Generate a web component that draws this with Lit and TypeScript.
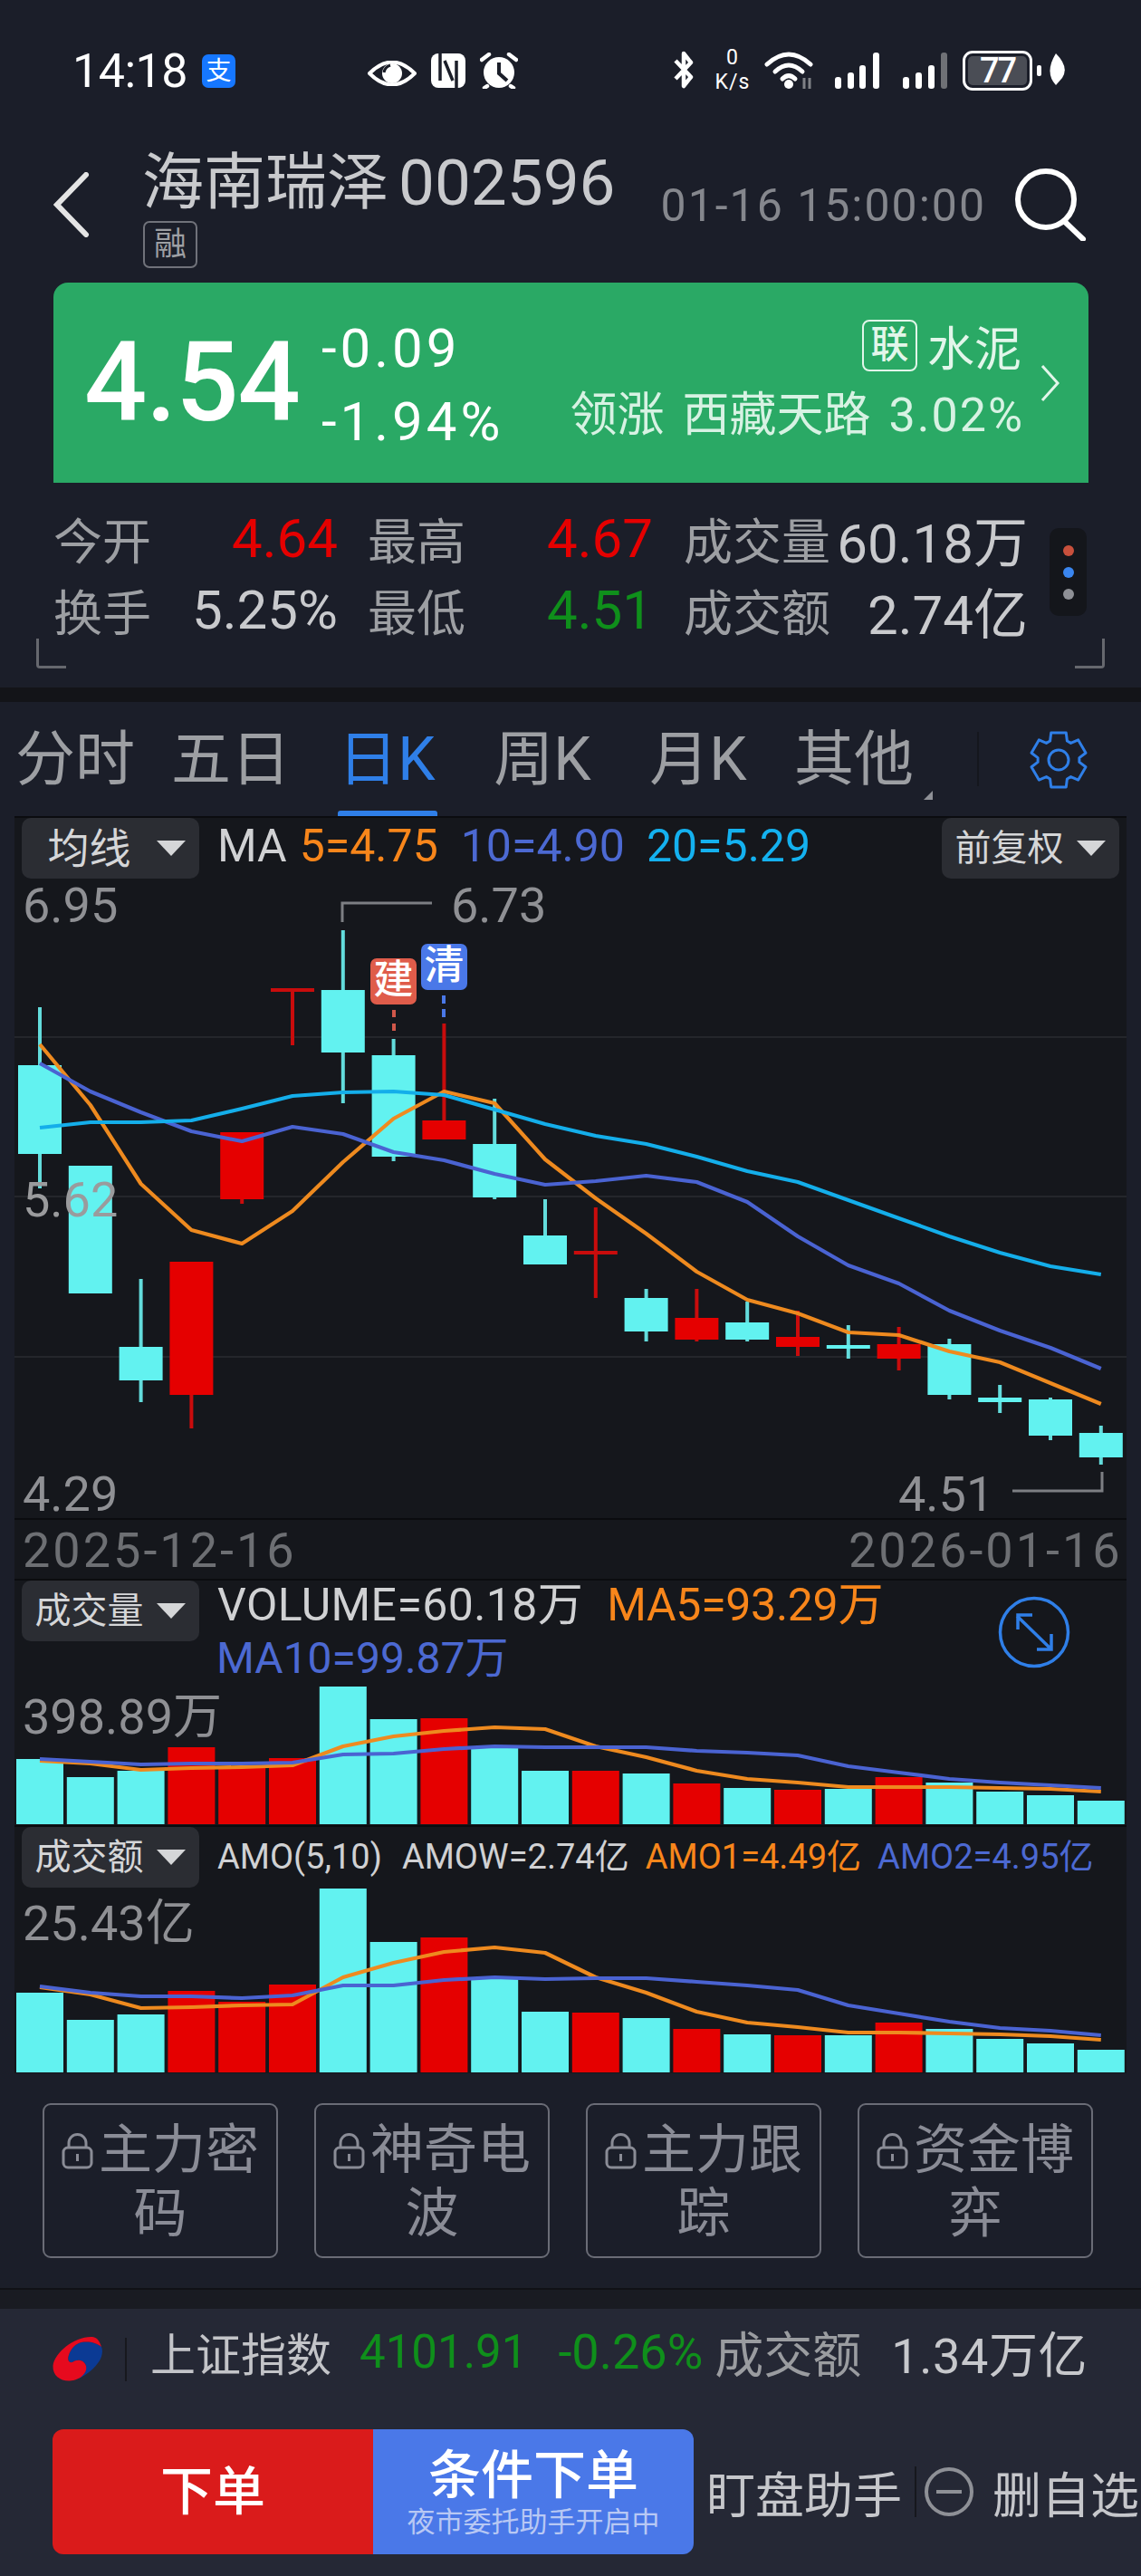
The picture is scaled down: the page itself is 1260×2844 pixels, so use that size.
import { LitElement, html, css, svg } from "lit";
import { customElement } from "lit/decorators.js";

type Candle = [number, number, number, number, number]; // up, wickTop, wickBot, bodyTop, bodyBot
const cx = (i: number) => 44 + 55.8 * i;
const CANDLES: Candle[] = [
  [0, 1112, 1312, 1176, 1274],
  [0, 1287, 1428, 1287, 1428],
  [0, 1412, 1548, 1487, 1524],
  [1, 1393, 1577, 1393, 1540],
  [1, 1250, 1329, 1250, 1324],
  [1, 1091, 1154, 1091, 1095],
  [0, 1027, 1218, 1093, 1162],
  [0, 1147, 1282, 1165, 1277],
  [1, 1130, 1258, 1237, 1258],
  [0, 1213, 1324, 1263, 1322],
  [0, 1324, 1396, 1364, 1396],
  [1, 1333, 1433, 1381, 1385],
  [0, 1423, 1481, 1433, 1470],
  [1, 1423, 1481, 1455, 1479],
  [0, 1437, 1481, 1460, 1479],
  [1, 1447, 1497, 1476, 1487],
  [0, 1463, 1500, 1485, 1489],
  [1, 1465, 1513, 1484, 1500],
  [0, 1478, 1545, 1484, 1540],
  [0, 1529, 1560, 1543, 1548],
  [0, 1543, 1590, 1545, 1585],
  [0, 1574, 1617, 1582, 1609],
];
const K_MA5 = [1153,1220,1307,1358,1373,1337,1283,1235,1205,1218,1280,1323,1362,1404,1435,1450,1471,1474,1492,1504,1527,1550];
const K_MA10 = [1174,1205,1228,1249,1260,1244,1252,1272,1281,1296,1308,1304,1298,1305,1327,1365,1397,1417,1447,1469,1488,1511];
const K_MA20 = [1245,1239,1239,1237,1224,1210,1206,1205,1209,1225,1241,1254,1263,1277,1293,1305,1325,1345,1365,1383,1398,1407];
const V_UP = [0,0,0,1,1,1,0,0,1,0,0,1,0,1,0,1,0,1,0,0,0,0];
const V_TOP = [1942,1962,1955,1929,1950,1941,1862,1898,1897,1930,1955,1955,1958,1969,1974,1976,1975,1962,1968,1978,1982,1988];
const V_MA5 = [1944,1947,1954,1952,1951,1949,1928,1917,1911,1907,1909,1928,1940,1955,1964,1968,1973,1973,1973,1974,1975,1978];
const V_MA10 = [1942,1945,1948,1947,1947,1946,1937,1936,1931,1928,1929,1929,1929,1933,1935,1938,1950,1957,1964,1968,1971,1974];
const A_TOP = [2200,2230,2224,2198,2210,2191,2085,2144,2139,2185,2221,2222,2228,2240,2246,2247,2247,2233,2240,2251,2256,2263];
const A_MA1 = [2194,2202,2217,2216,2214,2213,2183,2167,2155,2150,2156,2183,2200,2221,2233,2238,2244,2244,2245,2246,2248,2252];
const A_MA2 = [2193,2200,2204,2204,2206,2203,2192,2192,2186,2183,2185,2184,2184,2188,2192,2197,2214,2223,2232,2239,2242,2247];

const CYAN = "#62f2f0";
const CYAN_W = "#63dcdc";
const RED = "#e50000";
const RED_W = "#c90c0c";
const ORANGE = "#ee8a1f";
const BLUE = "#4a63d2";
const SKY = "#14aeea";

const pts = (ys: number[]) => ys.map((y, i) => `${cx(i)},${y}`).join(" ");
const line = (ys: number[], c: string, w = 4.2) =>
  svg`<polyline points=${pts(ys)} fill="none" stroke=${c} stroke-width=${w} stroke-linejoin="round"></polyline>`;
const bars = (tops: number[], base: number) =>
  tops.map(
    (t, i) =>
      svg`<rect x=${cx(i) - 26} y=${t} width="52" height=${base - t} fill=${V_UP[i] ? RED : CYAN}></rect>`
  );

function gearPath(c: number, r1: number, r2: number): string {
  const p: string[] = [];
  for (let i = 0; i < 6; i++) {
    const a = (-90 + i * 60) * (Math.PI / 180);
    const d = 0.27;
    const v = [
      [r1, a - 0.52 + 0.1],
      [r2, a - d],
      [r2, a + d],
      [r1, a + 0.52 - 0.1],
    ];
    for (const [r, t] of v) p.push(`${(c + r * Math.cos(t)).toFixed(1)} ${(c + r * Math.sin(t)).toFixed(1)}`);
  }
  return "M" + p.join("L") + "Z";
}

const caret = html`<i class="caret"></i>`;
const lock = html`<svg class="lock" viewBox="0 0 35 40"><path d="M8 17V11a9.500 9.500 0 0 1 19 0v6" fill="none" stroke="#8a8c96" stroke-width="3"/><rect x="2" y="16" width="31" height="22" rx="5" fill="none" stroke="#8a8c96" stroke-width="3"/><rect x="16" y="23" width="3" height="8" fill="#8a8c96"/></svg>`;

@customElement("app-root")
export class AppRoot extends LitElement {
  static styles = css`
    :host {
      display: block;
      width: 1260px;
      height: 2844px;
      overflow: hidden;
      background: #1b1e29;
      font-family: Roboto, "Noto Sans CJK SC", sans-serif;
      color: #c9cacd;
    }
    * { box-sizing: border-box; }

    /* status bar */
    .status { height: 150px; display: flex; align-items: flex-start; padding: 56px 0 0 80px; color: #fff; position: relative; }
    .time { font-size: 52px; line-height: 46px; width: 143px; letter-spacing: -0.5px; }
    .ali { width: 37px; height: 37px; margin-top: 4px; border-radius: 7px; background: #1677ff; color: #fff; font-size: 28px; line-height: 37px; text-align: center; }
    .s-center { margin-left: 146px; display: flex; align-items: center; gap: 16px; height: 44px; }
    .s-right { margin-left: 170px; display: flex; align-items: flex-start; height: 44px; }
    .net { width: 46px; margin: -6px 0 0 18px; text-align: center; font-size: 23px; line-height: 27px; letter-spacing: 1px; }
    .wifi { margin-left: 12px; }
    .sig1 { margin-left: 21px; }
    .sig2 { margin-left: 23px; }
    .batt { width: 77px; height: 44px; margin-left: 15px; border: 3px solid #fff; border-radius: 11px; padding: 3px; }
    .batt span { display: block; height: 32px; border-radius: 5px; background: #4a4d55; font-size: 38px; line-height: 32px; font-weight: 500; text-align: center; letter-spacing: -2px; }
    .leaf { margin-left: 5px; }

    /* header */
    .head { height: 150px; display: flex; align-items: flex-start; position: relative; }
    .back { width: 40px; height: 72px; margin: 40px 0 0 59px; }
    .name { margin-left: 58px; padding-top: 17px; }
    .name-row { display: flex; align-items: center; height: 70px; font-size: 68px; line-height: 70px; color: #c9cacd; }
    .name-row b { font-weight: 400; margin-left: 11px; font-size: 71px; }
    .rong { width: 60px; height: 52px; margin: 7px 0 0 1px; border: 2px solid #70727a; border-radius: 7px; color: #9d9fa3; font-size: 36px; line-height: 48px; text-align: center; }
    .date { margin-left: auto; margin-right: 31px; margin-top: 52px; font-size: 50px; line-height: 50px; color: #85878d; letter-spacing: 2px; }
    .search { width: 80px; height: 80px; margin: 36px 60px 0 0; }

    /* quote card */
    .card { margin: 12px 58px 0 59px; height: 221px; background: #2aa965; border-radius: 16px 16px 0 0; display: flex; color: #fff; position: relative; }
    .price { font-size: 122px; line-height: 221px; font-weight: 500; padding-left: 34px; width: 296px; letter-spacing: -1px; }
    .chg { font-size: 60px; line-height: 80px; padding-top: 33px; letter-spacing: 4px; }
    .chg div { height: 81px; }
    .sector { margin-left: auto; margin-right: 71px; display: flex; flex-direction: column; align-items: flex-end; padding-top: 38px; color: #d7f2e3; font-size: 52px; }
    .sector-top { display: flex; align-items: center; height: 62px; margin-right: 3px; color: #e2f6ea; }
    .lian { width: 61px; height: 57px; margin-right: 11px; border: 2px solid #e2f6ea; border-radius: 8px; font-size: 42px; line-height: 51px; text-align: center; font-weight: 500; }
    .sector-bot { margin-top: 16px; line-height: 62px; display: flex; gap: 20px; white-space: nowrap; }
    .sector-bot .pct { letter-spacing: 2px; }
    .chev { position: absolute; left: 1089px; top: 90px; width: 24px; height: 42px; }

    /* stats */
    .stats { height: 226px; position: relative; padding: 22px 0 0 59px; display: grid; grid-template-columns: 120px 194px 140px 208px 195px 219px; grid-auto-rows: 79px; align-items: center; font-size: 54px; color: #9d9fa3; }
    .v { text-align: right; font-size: 60px; color: #c9cacd; white-space: nowrap; }
    .l { white-space: nowrap; }
    .l3 { padding-left: 33px; }
    .l5 { padding-left: 34px; }
    .r { color: #e50000; }
    .g { color: #0f8f1b; }
    .dots { position: absolute; left: 1159px; top: 50px; width: 41px; height: 97px; border-radius: 10px; background: #14161b; display: flex; flex-direction: column; align-items: center; gap: 12px; padding-top: 19px; }
    .dots i { width: 12px; height: 12px; border-radius: 50%; }
    .d1 { background: #c8503c; } .d2 { background: #3a86f0; } .d3 { background: #8e9096; }
    .corner { position: absolute; top: 172px; width: 33px; height: 33px; border-bottom: 3px solid #66686e; }
    .c-l { left: 40px; border-left: 3px solid #66686e; border-bottom-left-radius: 4px; }
    .c-r { left: 1187px; border-right: 3px solid #66686e; border-bottom-right-radius: 4px; }
    .band { height: 16px; background: #131418; }

    /* tabs */
    .tabs { height: 126px; display: flex; align-items: flex-start; padding-top: 28px; }
    .tab-grid { display: grid; grid-template-columns: repeat(6, 172px); margin-left: -3px; }
    .tab { position: relative; height: 98px; text-align: center; font-size: 66px; line-height: 72px; color: #9d9fa3; }
    .tab.on { color: #2f7fe8; }
    .tab.on::after { content: ""; position: absolute; left: 32px; width: 110px; top: 92px; height: 6px; border-radius: 3px 3px 0 0; background: #2f7fe8; }
    .tab.more::after { content: ""; position: absolute; left: 163px; top: 70px; border-style: solid; border-width: 0 0 10px 10px; border-color: transparent transparent #8e9096 transparent; }
    .tab-sep { width: 2px; height: 60px; margin: 5px 0 0 50px; background: #15171d; }
    .gear { width: 66px; height: 66px; margin: 3px 0 0 55px; }

    /* chart */
    .chart { margin: 0 16px; width: 1228px; background: #15171c; }
    .pane { position: relative; border-top: 2px solid #0b0c0f; }
    .pane svg.plot { position: absolute; left: 0; top: -2px; width: 1228px; }
    .legend { position: relative; display: flex; align-items: flex-start; padding-left: 8px; font-size: 50px; line-height: 50px; white-space: nowrap; color: #d0d1d3; }
    .chip { width: 196px; height: 67px; border-radius: 10px; background: #2b2d33; display: flex; align-items: center; font-size: 46px; color: #d5d6d8; flex: none; }
    .chip.three { font-size: 40px; }
    .chip span { flex: 1; text-align: center; }
    .caret { width: 0; height: 0; margin-right: 15px; border-style: solid; border-width: 17px 16px 0 16px; border-color: #d5d6d8 transparent transparent transparent; }
    .o { color: #f8861b; } .b { color: #4c69d2; } .s { color: #14b1ef; }
    .lbl { position: absolute; font-size: 54px; line-height: 54px; color: #8f9094; white-space: nowrap; }

    .p-k { height: 775px; }
    .p-k .t { margin-top: 6px; }
    .k-ma { margin-left: 20px; }
    .k-5 { margin-left: 14px; } .k-10 { margin-left: 25px; } .k-20 { margin-left: 24px; }
    .chip-fq { position: absolute; left: 1024px; top: 0; }
    .hi-l { left: 9px; top: 70px; }
    .hi-v { left: 482px; top: 70px; }
    .mid-l { left: 9px; top: 395px; color: #9a9b9d; }
    .lo-l { left: 9px; top: 720px; }
    .lo-v { left: 976px; top: 720px; }
    .badge { position: absolute; width: 51px; height: 51px; border-radius: 7px; color: #fff; font-size: 44px; line-height: 49px; text-align: center; font-weight: 500; }
    .b-jian { left: 393px; top: 155px; background: #df5c4a; }
    .b-qing { left: 449px; top: 139px; background: #4a78e8; }

    .p-d { height: 67px; }
    .d-l { left: 9px; top: 7px; color: #6d6f73; letter-spacing: 3px; }
    .d-r { left: 921px; top: 7px; color: #6d6f73; letter-spacing: 3px; }

    .p-v { height: 272px; }
    .p-v .t { margin-top: 2px; }
    .vol { margin-left: 20px; letter-spacing: 0.4px; }
    .v-2 { margin-left: 26px; letter-spacing: -0.3px; }
    .v-3 { position: absolute; left: 223px; top: 61px; font-size: 48px; }
    .p-v .v-3 { margin-top: 0; }
    .vmax { left: 9px; top: 124px; }
    .expand { position: absolute; left: 1086px; top: 17px; width: 80px; height: 80px; }

    .p-a { height: 274px; }
    .legend.small { font-size: 38px; line-height: 38px; }
    .legend.small .t { margin-top: 14px; }
    .a-0 { margin-left: 20px; } .a-1 { margin-left: 22px; } .a-2 { margin-left: 18px; }
    .amax { left: 9px; top: 80px; }

    /* locked tools */
    .tools { height: 237px; padding: 33px 53px 0 47px; display: grid; grid-template-columns: repeat(4, 260px); column-gap: 40px; }
    .tool { height: 171px; border: 2px solid #6a6c76; border-radius: 9px; padding: 15px 8px 0; text-align: center; font-size: 59px; line-height: 70px; color: #8a8c96; }
    .lock { display: inline-block; width: 35px; height: 40px; vertical-align: -1px; margin-right: 6px; }
    .band2 { height: 23px; background: #191b22; border-top: 2px solid #101116; }

    /* bottom */
    .bottom { height: 295px; background: #252835; padding-left: 58px; }
    .index { height: 94px; margin-bottom: 39px; display: flex; align-items: center; font-size: 50px; white-space: nowrap; }
    .logo { width: 57px; height: 52px; flex: none; margin-top: 18px; }
    .v-sep { width: 2px; height: 48px; margin: 18px 0 0 23px; background: #17181e; flex: none; }
    .idx-name { margin-left: 26px; color: #c3c4c8; }
    .idx-v { margin-left: 31px; color: #0f8f1b; font-size: 51px; }
    .idx-p { margin-left: 34px; color: #0f8f1b; font-size: 54px; }
    .idx-l { margin-left: 13px; color: #9a9ca0; font-size: 54px; }
    .idx-a { margin-left: 33px; color: #c7c8cc; font-size: 54px; letter-spacing: 0.6px; }
    .actions { display: flex; align-items: center; }
    .order { display: flex; width: 708px; height: 138px; border-radius: 12px; overflow: hidden; color: #fff; flex: none; }
    .o-red { width: 354px; background: #da1b1b; text-align: center; font-size: 58px; line-height: 138px; font-weight: 500; }
    .o-blue { width: 354px; background: #4a78e8; text-align: center; padding-top: 18px; }
    .o-blue b { display: block; font-size: 58px; line-height: 66px; font-weight: 500; }
    .o-blue small { display: block; font-size: 31px; line-height: 38px; color: #b8c8f4; }
    .helper { margin-left: 14px; font-size: 54px; color: #c6c7cb; white-space: nowrap; }
    .a-sep { width: 2px; height: 56px; margin-left: 14px; background: #16171d; flex: none; }
    .minus { width: 56px; height: 56px; margin-left: 8px; flex: none; }
    .del { margin-left: 20px; font-size: 54px; color: #c6c7cb; white-space: nowrap; }
  `;

  render() {
    const gear = gearPath(33, 23, 31);
    return html`
      <div class="status">
        <div class="time">14:18</div>
        <div class="ali">支</div>
        <div class="s-center">
          <svg width="54" height="28" viewBox="0 0 54 28" style="margin-top:6px"><path d="M2 14Q27-11 52 14Q27 39 2 14Z" fill="none" stroke="#fff" stroke-width="4" stroke-linejoin="round"/><circle cx="27" cy="14" r="11" fill="#fff"/><path d="M18 13Q19 7 25 5" fill="none" stroke="#1b1e29" stroke-width="3"/></svg>
          <svg width="38" height="38" viewBox="0 0 38 38"><rect width="38" height="38" rx="8" fill="#fff"/><path d="M10 0V30M28 8V38M15 8L24 30" fill="none" stroke="#1b1e29" stroke-width="3.500"/></svg>
          <svg width="42" height="40" viewBox="0 0 42 40"><circle cx="21" cy="22" r="17" fill="#fff"/><path d="M21 11V23L30 31" fill="none" stroke="#1b1e29" stroke-width="4"/><path d="M2 8L10 2M40 8L32 2M8 37L5 39M34 37L37 39" fill="none" stroke="#fff" stroke-width="4.500" stroke-linecap="round"/></svg>
        </div>
        <div class="s-right">
          <svg width="26" height="42" viewBox="0 0 26 42"><path d="M4 11L21 29L13 39L13 3L21 13L4 31" fill="none" stroke="#fff" stroke-width="4.500" stroke-linejoin="round"/></svg>
          <div class="net">0<br />K/s</div>
          <svg class="wifi" width="56" height="44" viewBox="0 0 56 44"><g fill="none" stroke="#fff" stroke-width="5" stroke-linecap="round"><path d="M3 15Q27-7 51 15"/><path d="M12 23Q27 9 42 23"/><path d="M20 31Q27 24 34 31"/></g><circle cx="27" cy="37" r="5" fill="#fff"/><path d="M44 30V42M50 30V42" stroke="#7f8186" stroke-width="3"/></svg>
          <svg class="sig1" width="52" height="44" viewBox="0 0 52 44"><g fill="#fff"><rect x="1" y="29" width="7" height="13" rx="3"/><rect x="15" y="24" width="7" height="18" rx="3"/><rect x="28" y="16" width="7" height="26" rx="3"/><rect x="43" y="2" width="7" height="40" rx="3"/></g></svg>
          <svg class="sig2" width="52" height="44" viewBox="0 0 52 44"><g fill="#fff"><rect x="1" y="29" width="7" height="13" rx="3"/><rect x="15" y="24" width="7" height="18" rx="3"/><rect x="29" y="16" width="7" height="26" rx="3"/></g><rect x="43" y="2" width="7" height="40" rx="3" fill="#6f7176"/></svg>
          <div class="batt"><span>77</span></div>
          <svg class="leaf" width="32" height="44" viewBox="0 0 32 44"><rect x="0" y="16" width="5" height="12" rx="2" fill="#fff"/><path d="M21 3Q36 18 28 30L21 38Q8 24 21 3Z" fill="#fff"/></svg>
        </div>
      </div>

      <div class="head">
        <svg class="back" viewBox="0 0 40 72"><path d="M36 3L4 36L36 69" fill="none" stroke="#e4e4e4" stroke-width="6" stroke-linecap="round"/></svg>
        <div class="name">
          <div class="name-row">海南瑞泽<b>002596</b></div>
          <div class="rong">融</div>
        </div>
        <div class="date">01-16 15:00:00</div>
        <svg class="search" viewBox="0 0 80 80"><circle cx="35" cy="34" r="31" fill="none" stroke="#fff" stroke-width="6"/><path d="M55 58L76 78" stroke="#fff" stroke-width="6" stroke-linecap="round"/></svg>
      </div>

      <div class="card">
        <div class="price">4.54</div>
        <div class="chg"><div>-0.09</div><div>-1.94%</div></div>
        <div class="sector">
          <div class="sector-top"><span class="lian">联</span>水泥</div>
          <div class="sector-bot"><span>领涨</span><span>西藏天路</span><span class="pct">3.02%</span></div>
        </div>
        <svg class="chev" viewBox="0 0 24 42"><path d="M3 2L20 21L3 40" fill="none" stroke="#e2f6ea" stroke-width="3"/></svg>
      </div>

      <div class="stats">
        <div class="l">今开</div><div class="v r">4.64</div><div class="l l3">最高</div><div class="v r">4.67</div><div class="l l5">成交量</div><div class="v">60.18万</div>
        <div class="l">换手</div><div class="v">5.25%</div><div class="l l3">最低</div><div class="v g">4.51</div><div class="l l5">成交额</div><div class="v">2.74亿</div>
        <div class="dots"><i class="d1"></i><i class="d2"></i><i class="d3"></i></div>
        <div class="corner c-l"></div><div class="corner c-r"></div>
      </div>
      <div class="band"></div>

      <div class="tabs">
        <div class="tab-grid">
          <div class="tab">分时</div><div class="tab">五日</div><div class="tab on">日K</div><div class="tab">周K</div><div class="tab">月K</div><div class="tab more">其他</div>
        </div>
        <div class="tab-sep"></div>
        <svg class="gear" viewBox="0 0 66 66"><path d=${gear} fill="none" stroke="#2f7fe8" stroke-width="3" stroke-linejoin="round"/><circle cx="33" cy="33" r="11" fill="none" stroke="#2f7fe8" stroke-width="3"/></svg>
      </div>

      <div class="chart">
        <div class="pane p-k">
          <svg class="plot" height="775" viewBox="16 901 1228 775">
            ${[1145, 1321, 1498].map((y) => svg`<rect x="16" y=${y - 1} width="1228" height="2" fill="#24262b"></rect>`)}
            <path d="M378 1018V997H477M1118 1646H1217V1625" fill="none" stroke="#7d7f83" stroke-width="3"></path>
            ${CANDLES.map(([up, wt, wb, bt, bb], i) => svg`
              <rect x=${cx(i) - 2} y=${wt} width="4" height=${wb - wt} fill=${up ? RED_W : CYAN_W}></rect>
              <rect x=${cx(i) - 24} y=${bt} width="48" height=${bb - bt} fill=${up ? (bb - bt < 6 ? RED_W : RED) : CYAN}></rect>`)}
            <path d="M435 1115V1138" stroke="#d0574a" stroke-width="4" stroke-dasharray="8 7"></path>
            <path d="M490 1099V1123" stroke="#4a78e8" stroke-width="4" stroke-dasharray="9 6"></path>
            ${line(K_MA5, ORANGE)}
            ${line(K_MA10, BLUE)}
            ${line(K_MA20, SKY)}
          </svg>
          <div class="legend">
            <div class="chip"><span>均线</span>${caret}</div>
            <div class="t k-ma">MA</div>
            <div class="t o k-5">5=4.75</div>
            <div class="t b k-10">10=4.90</div>
            <div class="t s k-20">20=5.29</div>
            <div class="chip three chip-fq"><span>前复权</span>${caret}</div>
          </div>
          <div class="lbl hi-l">6.95</div>
          <div class="lbl hi-v">6.73</div>
          <div class="lbl mid-l">5.62</div>
          <div class="lbl lo-l">4.29</div>
          <div class="lbl lo-v">4.51</div>
          <div class="badge b-jian">建</div>
          <div class="badge b-qing">清</div>
        </div>
        <div class="pane p-d">
          <div class="lbl d-l">2025-12-16</div>
          <div class="lbl d-r">2026-01-16</div>
        </div>
        <div class="pane p-v">
          <svg class="plot" height="272" viewBox="16 1743 1228 272">
            ${bars(V_TOP, 2014)}
            ${line(V_MA5, ORANGE)}
            ${line(V_MA10, BLUE)}
          </svg>
          <div class="legend">
            <div class="chip three"><span>成交量</span>${caret}</div>
            <div class="t vol">VOLUME=60.18万</div>
            <div class="t o v-2">MA5=93.29万</div>
            <div class="t b v-3">MA10=99.87万</div>
          </div>
          <div class="lbl vmax">398.89万</div>
          <svg class="expand" viewBox="0 0 80 80"><circle cx="40" cy="40" r="37.500" fill="none" stroke="#2f7fe8" stroke-width="3.500"/><path d="M21 22L58 58M22 37V21H38M59 42V59H43" fill="none" stroke="#2f7fe8" stroke-width="3.500"/></svg>
        </div>
        <div class="pane p-a">
          <svg class="plot" height="274" viewBox="16 2015 1228 274">
            ${bars(A_TOP, 2288)}
            ${line(A_MA1, ORANGE)}
            ${line(A_MA2, BLUE)}
          </svg>
          <div class="legend small">
            <div class="chip three"><span>成交额</span>${caret}</div>
            <div class="t a-0">AMO(5,10)</div>
            <div class="t a-1">AMOW=2.74亿</div>
            <div class="t o a-2">AMO1=4.49亿</div>
            <div class="t b a-2">AMO2=4.95亿</div>
          </div>
          <div class="lbl amax">25.43亿</div>
        </div>
      </div>

      <div class="tools">
        <div class="tool">${lock}主力密码</div>
        <div class="tool">${lock}神奇电波</div>
        <div class="tool">${lock}主力跟踪</div>
        <div class="tool">${lock}资金博弈</div>
      </div>
      <div class="band2"></div>

      <div class="bottom">
        <div class="index">
          <svg class="logo" viewBox="0 0 57 52"><path d="M29 8C37 5 48 7 54 12C56 16 55 24 50 30C44 38 36 44 26 48C33 44 38 40 37 33C35 26 27 25 22 29C18 30 16 26 18 21C20 15 24 10 29 8Z" fill="#0b3a94"/><path d="M44 1C25 0 2 18 0.500 33C0 44 9 50 19 49.500C30 49 39 41 37 33C35 26 27 25 22 29C18 30 16 26 18 21C20 15 24 10 29 8C37 5 48 7 54 12C52 6 50 2 44 1Z" fill="#e60a1e"/></svg>
          <div class="v-sep"></div>
          <div class="idx-name">上证指数</div>
          <div class="idx-v">4101.91</div>
          <div class="idx-p">-0.26%</div>
          <div class="idx-l">成交额</div>
          <div class="idx-a">1.34万亿</div>
        </div>
        <div class="actions">
          <div class="order">
            <div class="o-red">下单</div>
            <div class="o-blue"><b>条件下单</b><small>夜市委托助手开启中</small></div>
          </div>
          <div class="helper">盯盘助手</div>
          <div class="a-sep"></div>
          <svg class="minus" viewBox="0 0 56 56"><circle cx="28" cy="28" r="25" fill="none" stroke="#8e9096" stroke-width="4"/><path d="M14 28H42" stroke="#8e9096" stroke-width="4"/></svg>
          <div class="del">删自选</div>
        </div>
      </div>
    `;
  }
}
